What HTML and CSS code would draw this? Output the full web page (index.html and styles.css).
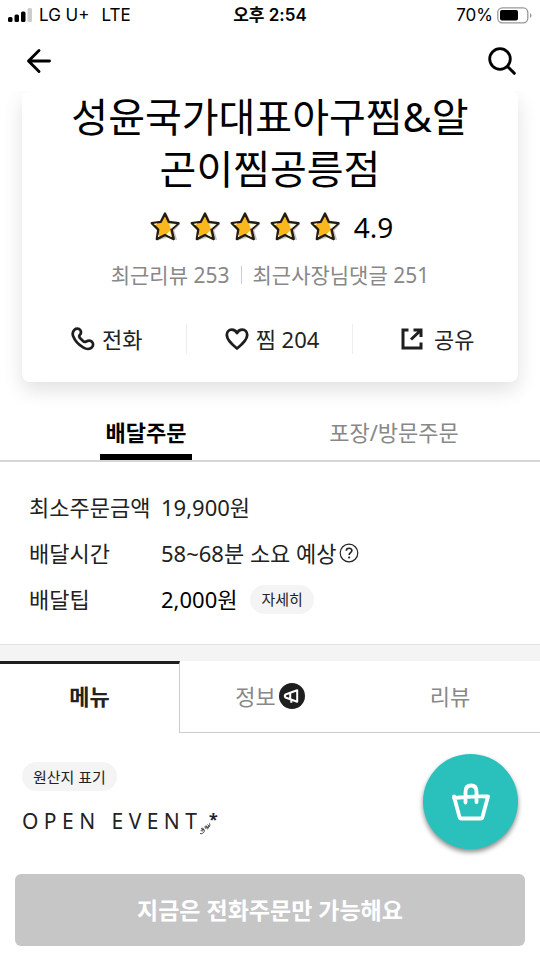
FILE: index.html
```html
<!DOCTYPE html>
<html lang="ko">
<head>
<meta charset="utf-8">
<meta name="viewport" content="width=device-width, initial-scale=1">
<title>성윤국가대표아구찜&amp;알곤이찜공릉점</title>
<link rel="stylesheet" href="styles.css">
</head>
<body>
<svg class="defs" width="0" height="0" aria-hidden="true">
  <symbol id="star" viewBox="0 0 32 32">
    <path d="M18 4 22 12l9.500 1.500-6.500 6.500L28 30 18 27 8 30.500l1-9.800L3 14l9-2z" fill="#999" opacity=".6"/>
    <path d="M15.500 2.500 19.300 11.200 29.500 12.500 22.300 19l2.200 10-9-4.200L7 29l1.500-9.800L1.800 12.500l9.400-1.300z" fill="#fbb81c" stroke="#231c10" stroke-width="2.400" stroke-linejoin="round"/>
    <path d="M19.800 13.200 27.500 13.700 21.500 18.700zM20.300 20.500l2.200 6.500-5.500-2.800zM3.500 13.300l4-.6-1.500 2zM8.700 24l1 2.300-1.500.8z" fill="#fff8e4"/>
  </symbol>
</svg>

<header class="top">
  <div class="status">
    <div class="carrier">
      <svg width="24" height="14" viewBox="0 0 24 14" aria-hidden="true"><rect x="0" y="9" width="4.500" height="5" rx="1.500"/><rect x="6.500" y="6.500" width="4.500" height="7.500" rx="1.500"/><rect x="13" y="3.500" width="4.500" height="10.500" rx="1.500"/><rect x="19.500" y="0" width="4.500" height="14" rx="1.500" fill="#ccc"/></svg>
      <span>LG U+</span><span class="network">LTE</span>
    </div>
    <div class="clock">오후 2:54</div>
    <div class="battery">
      <span>70%</span>
      <svg width="35" height="17" viewBox="0 0 35 17" aria-hidden="true"><rect x=".8" y=".8" width="30" height="15" rx="4.500" fill="none" stroke="#999" stroke-width="1.300"/><rect x="3" y="3" width="18" height="10.600" rx="2"/><path d="M33 6v5q1.500-.8 1.500-2.500T33 6z" fill="#999"/></svg>
    </div>
  </div>
  <nav class="bar">
    <button type="button" class="icon" aria-label="뒤로"><svg width="26" height="26" viewBox="0 0 26 26"><path d="M23.500 13H3M13 2.500 2.500 13 13 23.500" fill="none" stroke="#000" stroke-width="2.900" stroke-linecap="round" stroke-linejoin="round"/></svg></button>
    <button type="button" class="icon" aria-label="검색"><svg width="28" height="28" viewBox="0 0 28 28"><circle cx="12" cy="12" r="10.300" fill="none" stroke="#000" stroke-width="2.800"/><path d="m19.500 19.500 6.800 6.800" stroke="#000" stroke-width="3" stroke-linecap="round"/></svg></button>
  </nav>
</header>

<main>
  <section class="card">
    <h1>성윤국가대표아구찜&amp;알곤이찜공릉점</h1>
    <div class="rating">
      <svg><use href="#star"/></svg><svg><use href="#star"/></svg><svg><use href="#star"/></svg><svg><use href="#star"/></svg><svg><use href="#star"/></svg>
      <span>4.9</span>
    </div>
    <div class="counts"><span>최근리뷰 253</span><i></i><span>최근사장님댓글 251</span></div>
    <div class="actions">
      <button type="button"><svg width="24" height="24" viewBox="0 0 24 24"><path d="M3.500 2.800C5 1.300 8 1.300 9.200 3c1 1.600 1 3.400-.2 4.700-1 1.100-1 2.200 0 3.300l3 3c1 1 2 1.200 3.200.5 1.800-1.100 3.800-1.200 5.300-.1 1.900 1.400 2.100 4 .5 5.800-2 2.100-5.600 2.100-8.500.4C8 18 3.800 13.600 2.200 9.300 1.300 7 1.700 4.500 3.500 2.800z" fill="none" stroke="#1e1e1e" stroke-width="2.700" stroke-linejoin="round"/></svg><span>전화</span></button>
      <button type="button"><svg width="24" height="24" viewBox="0 0 24 24"><path d="M12 21.500C7 17.500 1.800 13 1.800 8c0-3.200 2.100-5.300 4.900-5.300C9 2.700 11 4 12 6c1-2 3-3.300 5.300-3.300 2.800 0 4.900 2.100 4.900 5.300 0 5-5.200 9.500-10.200 13.500z" fill="none" stroke="#1e1e1e" stroke-width="2.800" stroke-linejoin="round"/></svg><span>찜 204</span></button>
      <button type="button" class="share"><svg width="22" height="22" viewBox="0 0 22 22"><path d="M7.500 2H2v18h18v-5.500M12.500 2H20v7M19.500 2.500 10 11.500" fill="none" stroke="#1e1e1e" stroke-width="3"/></svg><span>공유</span></button>
    </div>
  </section>

  <nav class="order-tabs">
    <button type="button" class="on">배달주문</button>
    <button type="button">포장/방문주문</button>
  </nav>

  <dl class="info">
    <dt>최소주문금액</dt><dd>19,900원</dd>
    <dt>배달시간</dt><dd>58~68분 소요 예상<button type="button" class="help" aria-label="도움말"><svg width="20" height="20" viewBox="0 0 20 20"><circle cx="10" cy="10" r="8.800" fill="none" stroke="#222" stroke-width="1.200"/><path d="M7.300 7.800c0-3.500 5.600-3.300 5.600-.3 0 2-2.800 2.200-2.800 4.400" fill="none" stroke="#222" stroke-width="1.600"/><circle cx="10.100" cy="14.500" r="1.100" fill="#222"/></svg></button></dd>
    <dt>배달팁</dt><dd class="fee">2,000원<button type="button" class="chip">자세히</button></dd>
  </dl>

  <nav class="tabs">
    <button type="button" class="on">메뉴</button>
    <button type="button">정보<svg width="26" height="26" viewBox="0 0 26 26" aria-hidden="true"><circle cx="13" cy="13" r="13" fill="#1e1e1e"/><path d="M18.200 7.300v11.400l-7-2.400-4.700-1.800q-1.400-1.500 0-3l4.700-1.800zM11.200 9.800v6.400M12.300 16.500v3.200" fill="none" stroke="#fff" stroke-width="2" stroke-linejoin="round"/></svg></button>
    <button type="button">리뷰</button>
  </nav>

  <section class="menu">
    <button type="button" class="chip">원산지 표기</button>
    <h2>O P E N   E V E N T<svg width="12" height="15" viewBox="0 0 12 15" aria-hidden="true"><path d="M2 7.500c2.500-1 3.500 1 2 2.200-1.500 1-2.500-.2-1.300-1 2-1.200 3.300.3 2.500 2-.7 1.500-2.500 2.300-4.200 1.800M5.500 6c1.500-2 3.500-.5 2.200 1-1 1-2.300 0-1.200-1 1.800-1.200 3.200.8 2 2.300M8.500 3.500c1.500.5 1.200 2.200.3 3 1.700-.3 2.700-2 1.700-4.200" fill="none" stroke="#333" stroke-width=".9"/></svg><small>*</small></h2>
  </section>

  <button type="button" class="cta" disabled>지금은 전화주문만 가능해요</button>
</main>

<button type="button" class="fab" aria-label="장바구니"><svg width="38" height="38" viewBox="0 0 38 38"><path d="M2 13.500 7.500 34q.4 1.500 2 1.500h19q1.600 0 2-1.500L36 13.500q-17-.5-34 1.500M13.500 19.500V9q0-6.500 5.500-6.500T24.500 9v10" fill="none" stroke="#fff" stroke-width="3.800" stroke-linecap="round" stroke-linejoin="round"/></svg></button>
</body>
</html>
```

FILE: styles.css
```css
* { box-sizing: border-box; }
body {
  margin: 0;
  background: #fff;
  color: #222;
  font: 22px/30px "Noto Sans", "Noto Sans CJK KR", sans-serif;
}
h1, h2, dl, dd { margin: 0; font-weight: 400; }
button {
  margin: 0;
  padding: 0;
  border: 0;
  background: none;
  color: inherit;
  font: inherit;
}
svg { display: block; flex: none; }
.defs { position: absolute; }

.top {
  position: sticky;
  top: 0;
  z-index: 2;
  background: #fff;
  color: #000;
}
.status {
  display: grid;
  grid-template-columns: 1fr auto 1fr;
  align-items: center;
  height: 30px;
  padding: 0 8px;
  font: 17px/30px Inter, "Noto Sans CJK KR", sans-serif;
}
.carrier, .battery { display: flex; align-items: center; gap: 7px; }
.network { margin-left: 5px; }
.battery { justify-content: flex-end; gap: 4px; }
.clock { font-weight: 600; }
.bar {
  display: flex;
  align-items: center;
  justify-content: space-between;
  height: 61px;
  padding: 0 24px 0 26px;
}

.card {
  margin: 0 22px;
  padding: 0 40px 28px;
  border-radius: 8px;
  background: #fff;
  box-shadow: 0 8px 20px rgba(0, 0, 0, .12);
  text-align: center;
}
h1 { color: #000; font-size: 40px; line-height: 52px; }
.rating {
  display: flex;
  align-items: center;
  justify-content: center;
  gap: 9px;
  height: 63px;
  padding-left: 3px;
  color: #000;
  font-size: 28px;
}
.rating svg { width: 31px; height: 31px; }
.rating span { margin-left: 4px; }
.counts {
  display: flex;
  align-items: center;
  justify-content: center;
  gap: 11px;
  height: 34px;
  color: #888;
  font-size: 21px;
}
.counts i { width: 1px; height: 18px; background: #ccc; }
.actions {
  display: grid;
  grid-template-columns: 1fr 1fr 1fr;
  margin: 32px -40px 0;
}
.actions button {
  display: flex;
  align-items: center;
  justify-content: center;
  gap: 7px;
  height: 30px;
  padding-left: 5px;
  border-right: 1px solid #eee;
}
.actions .share { gap: 11px; border: 0; }

.order-tabs {
  display: grid;
  grid-template-columns: 1fr 1fr;
  height: 61px;
  margin-top: 19px;
  padding: 0 22px;
  border-bottom: 2px solid #d6d6d6;
  color: #888;
}
.order-tabs button {
  justify-self: center;
  padding: 8px 6px 0;
  border-bottom: 6px solid transparent;
}
.order-tabs .on { border-color: #000; color: #000; font-weight: 700; }

.info {
  display: grid;
  grid-template-columns: 132px 1fr;
  grid-auto-rows: 46px;
  align-items: center;
  padding: 22px 29px 23px;
}
.info dd { display: flex; align-items: center; }
.fee { color: #000; }
.help { margin-left: 2px; }
.chip {
  height: 29px;
  padding: 0 11px;
  border-radius: 15px;
  background: #f4f4f4;
  color: #222;
  font-size: 15px;
  line-height: 22px;
}
.fee .chip { margin-left: 13px; }

.tabs {
  display: grid;
  grid-template-columns: 1fr 1fr 1fr;
  border-top: 16px solid #f4f4f4;
  box-shadow: 0 -1px 0 #e2e2e2;
  color: #888;
}
.tabs button {
  display: flex;
  align-items: center;
  justify-content: center;
  gap: 3px;
  height: 72px;
  padding-bottom: 1px;
  border-bottom: 1px solid #ccc;
}
.tabs .on {
  padding-bottom: 5px;
  border-top: 3px solid #1e1e1e;
  border-right: 1px solid #ccc;
  border-bottom: 0;
  color: #222;
  font-weight: 700;
}

.menu { padding: 29px 22px 0; }
.menu .chip { display: block; }
.menu h2 {
  display: flex;
  align-items: center;
  margin-top: 15px;
  font-size: 21px;
  white-space: pre;
}
.menu h2 svg { align-self: flex-end; margin-left: 2px; }
.menu small { font-size: 16px; font-weight: 700; line-height: 20px; margin: 0 0 4px -2px; }

.cta {
  display: block;
  width: calc(100% - 30px);
  height: 72px;
  margin: 38px 15px 14px;
  border-radius: 6px;
  background: #c6c6c6;
  color: #fff;
  font-size: 23px;
  font-weight: 700;
}
.fab {
  position: fixed;
  right: 22px;
  bottom: 112px;
  display: grid;
  place-items: center;
  width: 95px;
  height: 95px;
  border-radius: 50%;
  background: #2ac1bc;
  box-shadow: 0 3px 5px rgba(0, 0, 0, .45);
}
```
